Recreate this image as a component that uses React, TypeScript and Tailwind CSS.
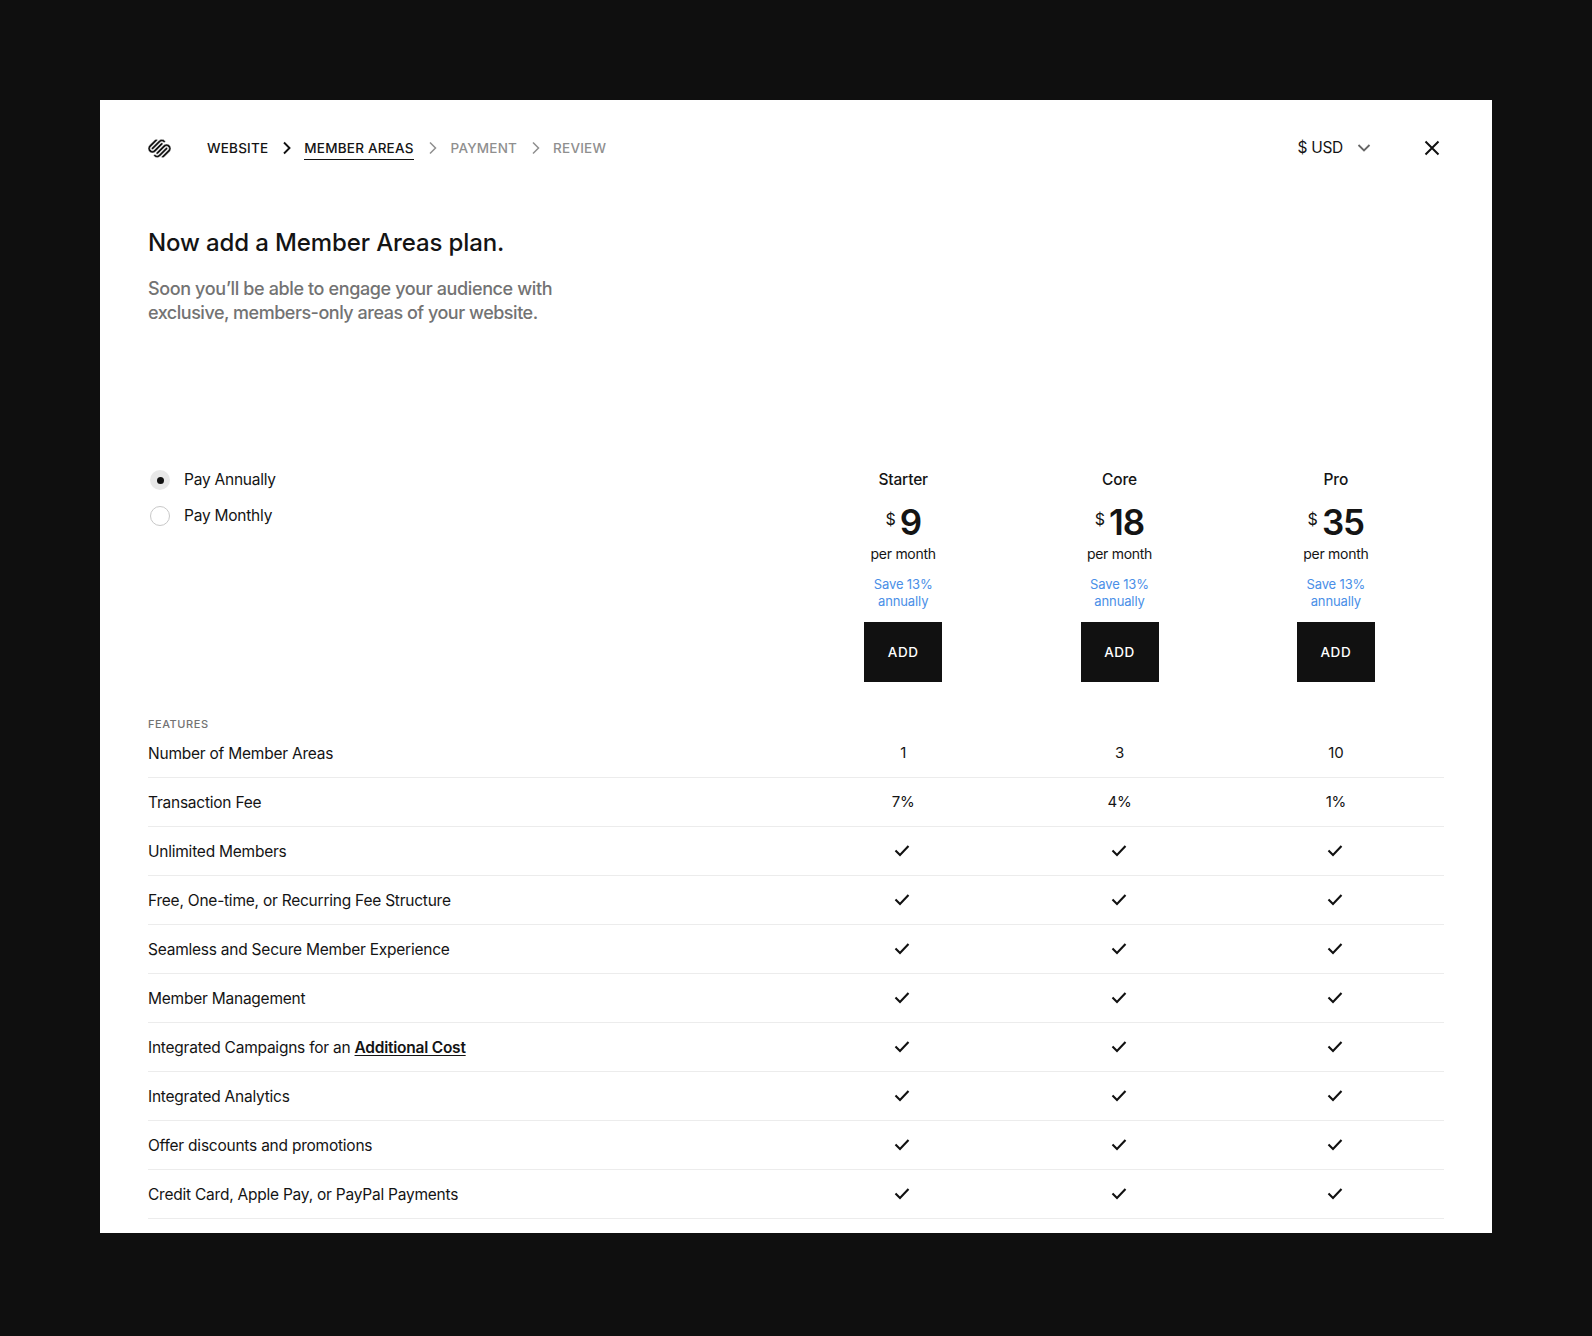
import React from 'react';
import { SiSquarespace } from 'react-icons/si';

const rows: { label: React.ReactNode; values?: string[] }[] = [
  { label: 'Number of Member Areas', values: ['1', '3', '10'] },
  { label: 'Transaction Fee', values: ['7%', '4%', '1%'] },
  { label: 'Unlimited Members' },
  { label: 'Free, One-time, or Recurring Fee Structure' },
  { label: 'Seamless and Secure Member Experience' },
  { label: 'Member Management' },
  {
    label: (
      <>
        Integrated Campaigns for an <span className="font-semibold underline underline-offset-2">Additional Cost</span>
      </>
    ),
  },
  { label: 'Integrated Analytics' },
  { label: 'Offer discounts and promotions' },
  { label: 'Credit Card, Apple Pay, or PayPal Payments' },
];

const plans = [
  { name: 'Starter', price: '9' },
  { name: 'Core', price: '18' },
  { name: 'Pro', price: '35' },
];

const Chevron = ({ light }: { light?: boolean }) => (
  <svg width="10" height="14" viewBox="0 0 10 14" fill="none" className={light ? 'text-[#8f8f8f]' : 'text-[#111111]'}>
    <path d="M2 1.5 7.5 7 2 12.5" stroke="currentColor" strokeWidth={light ? 1.5 : 1.9} />
  </svg>
);

const Check = () => (
  <svg width="16" height="13" viewBox="0 0 16 13" fill="none" className="mx-auto -translate-x-px -translate-y-px">
    <path d="M1.5 6.5 6 11 14.5 2" stroke="#111111" strokeWidth="2.1" />
  </svg>
);

const App = () => {
  return (
    <div className="h-[1336px] bg-[#0f0f0f] pt-[100px] px-[100px] font-['Inter',sans-serif] text-[#141414] overflow-hidden">
      <div className="h-[1133px] bg-white px-12 pt-9 overflow-hidden">
        <div className="flex items-center h-6">
          <SiSquarespace className="w-[23px] h-[23px] text-[#111111]" stroke="#ffffff" strokeWidth={0.5} />
          <nav className="flex items-center ml-[36px] text-[13.5px] font-medium tracking-[0.015em]">
            <span>WEBSITE</span>
            <span className="ml-[14px] mr-[12px]"><Chevron /></span>
            <span className="relative">
              MEMBER AREAS
              <span className="absolute left-0 right-0 -bottom-[2px] h-px bg-[#111111]" />
            </span>
            <span className="ml-[14px] mr-[13px]"><Chevron light /></span>
            <span className="text-[#8f8f8f]">PAYMENT</span>
            <span className="ml-[14px] mr-[12px]"><Chevron light /></span>
            <span className="text-[#8f8f8f]">REVIEW</span>
          </nav>
          <div className="ml-auto flex items-center text-[15.5px] tracking-[-0.02em]">
            <span>$ USD</span>
            <svg width="14" height="10" viewBox="0 0 14 10" fill="none" className="ml-[14px]">
              <path d="M1.5 2 7 7.5 12.5 2" stroke="#666666" strokeWidth="1.8" />
            </svg>
            <svg width="16" height="16" viewBox="0 0 16 16" fill="none" className="ml-[53px] mr-[4px]">
              <path d="M1.5 1.5 14.5 14.5M14.5 1.5 1.5 14.5" stroke="#111111" strokeWidth="2" />
            </svg>
          </div>
        </div>

        <h1 className="mt-[65px] text-[24px] leading-[36px] font-medium tracking-[-0.005em]">Now add a Member Areas plan.</h1>
        <p className="mt-[16px] text-[18px] leading-[24px] text-[#737373] font-medium tracking-[-0.021em]">
          Soon you’ll be able to engage your audience with
          <br />
          <span className="tracking-[-0.027em]">exclusive, members-only areas of your website.</span>
        </p>

        <div className="mt-[143px] grid grid-cols-[1fr_216.33px_216.33px_216.33px]">
          <div className="flex flex-col gap-[12px] text-[15.5px] tracking-[-0.015em]">
            <div className="flex items-center h-6">
              <span className="flex items-center justify-center w-5 h-5 rounded-full bg-[#e8e8e8] ml-[2px]">
                <span className="w-[7px] h-[7px] rounded-full bg-[#111111]" />
              </span>
              <span className="ml-[14px]">Pay Annually</span>
            </div>
            <div className="flex items-center h-6">
              <span className="w-5 h-5 rounded-full border border-[#c8c8c8] ml-[2px]" />
              <span className="ml-[14px]">Pay Monthly</span>
            </div>
          </div>
          {plans.map((plan) => (
            <div key={plan.name} className="flex flex-col items-center">
              <div className="h-6 text-[15.5px] leading-6 font-medium tracking-[-0.01em]">{plan.name}</div>
              <div className="mt-[10px] flex items-start h-10">
                <span className="text-[16px] leading-[20px] mt-[7px] mr-[4px]">$</span>
                <span className="text-[35px] leading-[40px] font-semibold tracking-[-0.03em]">{plan.price}</span>
              </div>
              <div className="mt-[4px] h-4 text-[14px] leading-4 tracking-[-0.02em]">per month</div>
              <div className="mt-[14px] text-[13px] leading-[17px] text-[#4a8fe7] text-center tracking-[-0.01em]">
                Save 13%
                <br />
                annually
              </div>
              <button className="mt-[12px] w-[78px] h-[60px] bg-[#111111] text-white text-[13.5px] font-medium tracking-[0.04em]">
                ADD
              </button>
            </div>
          ))}
        </div>

        <div className="mt-[34px] h-[13px] text-[11px] leading-4 tracking-[0.05em] text-[#737373] font-medium">FEATURES</div>
        <div>
          {rows.map((row, i) => (
            <div
              key={i}
              className="grid grid-cols-[1fr_216.33px_216.33px_216.33px] items-center h-[49px] border-b border-[#ececec] pt-px text-[15.5px] tracking-[-0.015em]"
            >
              <div>{row.label}</div>
              {[0, 1, 2].map((c) => (
                <div key={c} className="text-center text-[15px]">
                  {row.values ? row.values[c] : <Check />}
                </div>
              ))}
            </div>
          ))}
        </div>
      </div>
    </div>
  );
};

export default App;
